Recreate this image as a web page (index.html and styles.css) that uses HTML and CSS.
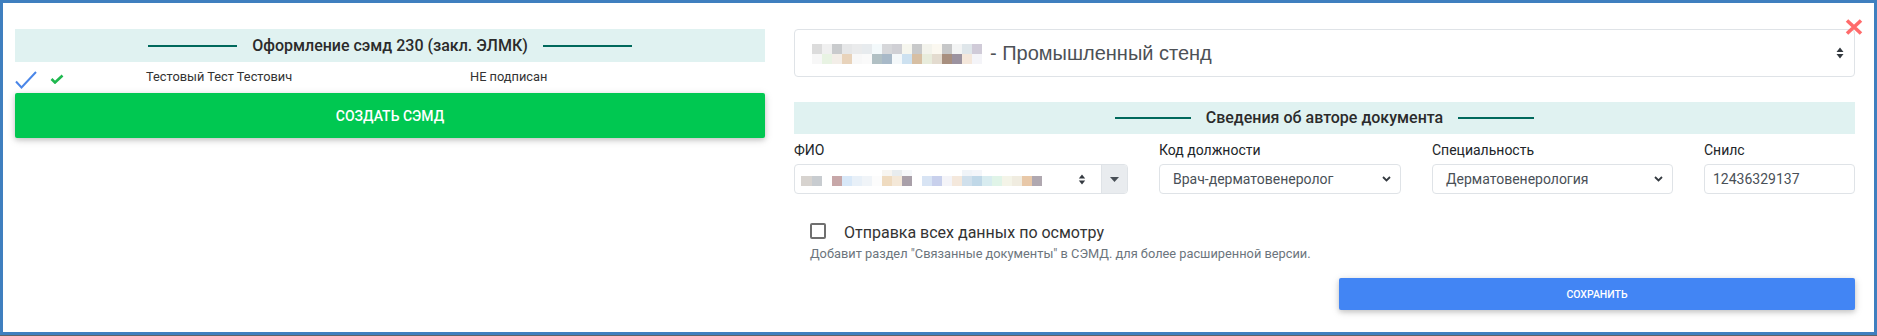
FILE: index.html
```html
<!DOCTYPE html>
<html lang="ru">
<head>
<meta charset="utf-8">
<title>СЭМД</title>
<link rel="stylesheet" href="styles.css">
</head>
<body>
<div class="frame">
  <section class="left">
    <div class="band"><span class="band-title">Оформление сэмд 230 (закл. ЭЛМК)</span></div>
    <div class="sign-row">
      <span class="cell">
        <svg class="check-big" width="22" height="18" viewBox="0 0 22 18"><path d="M1 10.5 L6.5 16.5 L21 1" fill="none" stroke="#4a86e8" stroke-width="2"/></svg>
      </span>
      <span class="cell">
        <svg class="check-small" width="14" height="10" viewBox="0 0 14 10"><path d="M1.5 5 L5 8.5 L12.5 1.5" fill="none" stroke="#1fb84f" stroke-width="2.6"/></svg>
      </span>
      <span class="cell name">Тестовый Тест Тестович</span>
      <span class="cell status">НЕ подписан</span>
    </div>
    <button class="btn btn-green">Создать СЭМД</button>
  </section>

  <section class="right">
    <div class="select-lg">
      <svg class="mosaic" width="170" height="20" viewBox="0 0 170 20">
        <g>
          <rect x="0" y="0" width="10" height="10" fill="#dcdcdc"/><rect x="10" y="0" width="10" height="10" fill="#f0f0f0"/><rect x="20" y="0" width="10" height="10" fill="#c9cbcd"/><rect x="30" y="0" width="10" height="10" fill="#e6e7e8"/><rect x="40" y="0" width="10" height="10" fill="#eaebec"/><rect x="50" y="0" width="10" height="10" fill="#e7ebee"/><rect x="60" y="0" width="10" height="10" fill="#f3f9fb"/><rect x="70" y="0" width="10" height="10" fill="#d6d7da"/><rect x="80" y="0" width="10" height="10" fill="#d0d0d5"/><rect x="90" y="0" width="10" height="10" fill="#f6f6ee"/><rect x="100" y="0" width="10" height="10" fill="#c8c9ca"/><rect x="110" y="0" width="10" height="10" fill="#f3f3ec"/><rect x="120" y="0" width="10" height="10" fill="#fbf8f0"/><rect x="130" y="0" width="10" height="10" fill="#c6c7c8"/><rect x="140" y="0" width="10" height="10" fill="#f3f4f4"/><rect x="150" y="0" width="10" height="10" fill="#dfe6ea"/><rect x="160" y="0" width="10" height="10" fill="#d0cbd8"/>
          <rect x="0" y="10" width="10" height="10" fill="#f7f7f7"/><rect x="10" y="10" width="10" height="10" fill="#e8f3e3"/><rect x="20" y="10" width="10" height="10" fill="#f3eee8"/><rect x="30" y="10" width="10" height="10" fill="#e8d3bb"/><rect x="40" y="10" width="10" height="10" fill="#f8f8f8"/><rect x="50" y="10" width="10" height="10" fill="#fafafa"/><rect x="60" y="10" width="10" height="10" fill="#b1c0c4"/><rect x="70" y="10" width="10" height="10" fill="#a8b9c8"/><rect x="80" y="10" width="10" height="10" fill="#f4f8fa"/><rect x="90" y="10" width="10" height="10" fill="#cde1f0"/><rect x="100" y="10" width="10" height="10" fill="#d7bfa3"/><rect x="110" y="10" width="10" height="10" fill="#e8ecdc"/><rect x="120" y="10" width="10" height="10" fill="#e3dbcf"/><rect x="130" y="10" width="10" height="10" fill="#a88f7f"/><rect x="140" y="10" width="10" height="10" fill="#9c93a0"/><rect x="150" y="10" width="10" height="10" fill="#f4e7db"/><rect x="160" y="10" width="10" height="10" fill="#f4f4f8"/>
        </g>
      </svg>
      <span class="select-lg-text">- Промышленный стенд</span>
      <svg class="sort-icon" width="8" height="12" viewBox="0 0 8 12"><path d="M4 0.5 L7.5 5 L0.5 5 Z M4 11.5 L7.5 7 L0.5 7 Z" fill="#343a40"/></svg>
    </div>
    <svg class="close-x" width="18" height="16" viewBox="0 0 18 16"><path d="M2 1.5 L16 14.5 M16 1.5 L2 14.5" stroke="#ff6b6b" stroke-width="3.6" stroke-linecap="butt"/></svg>

    <div class="band band-author"><span class="band-title">Сведения об авторе документа</span></div>

    <div class="fields">
      <div class="field">
        <label class="field-label">ФИО</label>
        <div class="combo">
          <div class="combo-main">
            <svg class="mosaic-sm" width="241" height="16" viewBox="0 0 241 16">
              <rect x="81" y="0" width="10" height="6" fill="#f7f5f1"/><rect x="91" y="0" width="10" height="6" fill="#e8ecee"/><rect x="101" y="0" width="10" height="6" fill="#f6f8fa"/><rect x="161" y="0" width="10" height="6" fill="#f0f4f8"/><rect x="171" y="0" width="10" height="6" fill="#f4f6fa"/>
              <rect x="0" y="6" width="11" height="10" fill="#d7d3cf"/><rect x="11" y="6" width="10" height="10" fill="#c8ccd0"/><rect x="31" y="6" width="10" height="10" fill="#c7a7a8"/><rect x="41" y="6" width="10" height="10" fill="#d8e8f8"/><rect x="51" y="6" width="10" height="10" fill="#e8f0f8"/><rect x="61" y="6" width="10" height="10" fill="#f0f4f8"/><rect x="71" y="6" width="10" height="10" fill="#fcfcfc"/><rect x="81" y="6" width="10" height="10" fill="#efdbc0"/><rect x="91" y="6" width="10" height="10" fill="#f4e8d8"/><rect x="101" y="6" width="10" height="10" fill="#a9a0a9"/><rect x="121" y="6" width="10" height="10" fill="#d8e4f4"/><rect x="131" y="6" width="10" height="10" fill="#c8d0ec"/><rect x="141" y="6" width="10" height="10" fill="#f4f4f8"/><rect x="151" y="6" width="10" height="10" fill="#f4e8dc"/><rect x="161" y="6" width="10" height="10" fill="#d0e0ec"/><rect x="171" y="6" width="10" height="10" fill="#c0d8e8"/><rect x="181" y="6" width="10" height="10" fill="#d8ecf0"/><rect x="191" y="6" width="10" height="10" fill="#e0f4e8"/><rect x="201" y="6" width="10" height="10" fill="#f4f4e8"/><rect x="211" y="6" width="10" height="10" fill="#f0ece0"/><rect x="221" y="6" width="10" height="10" fill="#e8c8a8"/><rect x="231" y="6" width="10" height="10" fill="#b0a8b0"/>
            </svg>
            <svg class="sort-icon-sm" width="8" height="11" viewBox="0 0 8 11"><path d="M4 0.5 L7.2 4.5 L0.8 4.5 Z M4 10.5 L7.2 6.5 L0.8 6.5 Z" fill="#343a40"/></svg>
          </div>
          <div class="combo-addon">
            <svg width="9" height="5" viewBox="0 0 9 5"><path d="M0 0 L9 0 L4.5 5 Z" fill="#495057"/></svg>
          </div>
        </div>
      </div>
      <div class="field">
        <label class="field-label">Код должности</label>
        <div class="control">
          <span class="control-text">Врач-дерматовенеролог</span>
          <svg class="chevron" width="9" height="6" viewBox="0 0 9 6"><path d="M1 1 L4.5 4.5 L8 1" fill="none" stroke="#343a40" stroke-width="1.8"/></svg>
        </div>
      </div>
      <div class="field">
        <label class="field-label">Специальность</label>
        <div class="control">
          <span class="control-text">Дерматовенерология</span>
          <svg class="chevron" width="9" height="6" viewBox="0 0 9 6"><path d="M1 1 L4.5 4.5 L8 1" fill="none" stroke="#343a40" stroke-width="1.8"/></svg>
        </div>
      </div>
      <div class="field">
        <label class="field-label">Снилс</label>
        <div class="control control-input">
          <span class="control-text">12436329137</span>
        </div>
      </div>
    </div>

    <div class="check-block">
      <label class="check-line"><span class="checkbox"></span><span class="check-text">Отправка всех данных по осмотру</span></label>
      <div class="help">Добавит раздел "Связанные документы" в СЭМД. для более расширенной версии.</div>
    </div>

    <div class="actions">
      <button class="btn btn-blue">Сохранить</button>
    </div>
  </section>
</div>
</body>
</html>
```

FILE: styles.css
```css
* { box-sizing: border-box; }

html, body {
  margin: 0;
  padding: 0;
}

body {
  width: 1877px;
  height: 336px;
  background: #5f6368;
  font-family: Roboto, "Noto Sans", "Liberation Sans", sans-serif;
  color: #212529;
  overflow: hidden;
}

.frame {
  position: relative;
  height: 335px;
  background: #fff;
  border: 3px solid #3f7fbf;
  padding: 26px 19px 0 12px;
  display: flex;
  gap: 29px;
}

.left {
  width: 750px;
  flex: none;
}

.right {
  width: 1061px;
  flex: none;
}

/* section header band */
.band {
  height: 33px;
  background: #e0f2f1;
  display: flex;
  align-items: center;
  justify-content: center;
  gap: 15px;
}

.band::before,
.band::after {
  content: "";
  width: 89px;
  height: 2px;
  background: #00695c;
}

.band-title {
  font-size: 16px;
  font-weight: 500;
  color: #2b2b2b;
  line-height: 1;
}

.band-author {
  margin-top: 25px;
  height: 32px;
}

.band-author::before,
.band-author::after {
  width: 76px;
}

/* signer row */
.sign-row {
  height: 31px;
  display: grid;
  grid-template-columns: 35px 96px 324px 1fr;
  align-items: center;
  font-size: 12.8px;
  color: #333;
}

.cell {
  display: flex;
  align-items: center;
}

.check-big {
  margin-top: 5px;
}

.check-small {
  margin-top: 2px;
}

.name,
.status {
  margin-top: -3px;
}

/* buttons */
.btn {
  display: block;
  width: 100%;
  border: 0;
  border-radius: 2px;
  color: #fff;
  font-family: Roboto, "Noto Sans", sans-serif;
  font-weight: 500;
  text-transform: uppercase;
  box-shadow: 0 2px 5px rgba(0, 0, 0, 0.16), 0 2px 10px rgba(0, 0, 0, 0.12);
  cursor: pointer;
}

.btn-green {
  height: 45px;
  background: #00c851;
  font-size: 14px;
}

.btn-blue {
  width: 516px;
  height: 32px;
  background: #4285f4;
  font-size: 10.5px;
}

/* large select */
.select-lg {
  height: 48px;
  border: 1px solid #dfe3e7;
  border-radius: 4px;
  display: flex;
  align-items: center;
  padding: 0 10px 0 17px;
}

.mosaic {
  flex: none;
  margin-top: 1px;
}

.select-lg-text {
  margin-left: 8px;
  font-family: "Liberation Sans", Arial, sans-serif;
  font-size: 20px;
  color: #4d5156;
  flex: 1;
}

.close-x {
  position: absolute;
  top: 16px;
  right: 11px;
}

/* fields */
.fields {
  margin-top: 6px;
  display: grid;
  grid-template-columns: 334px 242px 241px 151px;
  column-gap: 31px;
}

.field-label {
  display: block;
  font-size: 14px;
  line-height: 20px;
  margin-bottom: 4px;
  color: #212529;
}

.control,
.combo {
  height: 30px;
  border: 1px solid #dfe3e7;
  border-radius: 4px;
  display: flex;
  align-items: center;
}

.control {
  padding: 0 9px 0 13px;
  justify-content: space-between;
}

.control-input {
  padding-left: 8px;
}

.control-text {
  font-size: 14px;
  color: #495057;
}

.combo-main {
  flex: 1;
  display: flex;
  align-items: center;
  justify-content: space-between;
  padding: 0 15px 0 6px;
}

.mosaic-sm {
  margin-top: -2px;
}

.combo-addon {
  width: 26px;
  height: 100%;
  background: #e9ecef;
  border-left: 1px solid #dfe3e7;
  border-radius: 0 3px 3px 0;
  display: flex;
  align-items: center;
  justify-content: center;
}

/* checkbox block */
.check-block {
  margin-top: 27px;
  padding-left: 16px;
}

.check-line {
  display: flex;
  align-items: center;
  gap: 18px;
  height: 20px;
}

.checkbox {
  width: 16px;
  height: 16px;
  border: 2px solid #6f6f6f;
  border-radius: 2px;
  flex: none;
}

.check-text {
  font-size: 16px;
  color: #333;
  margin-top: 3px;
}

.help {
  margin-top: 5px;
  font-size: 12.8px;
  color: #6c757d;
}

.actions {
  margin-top: 17px;
  display: flex;
  justify-content: flex-end;
}
```
